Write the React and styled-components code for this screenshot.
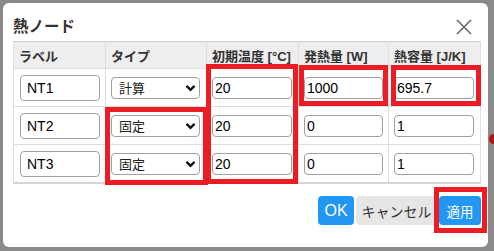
import React from "react";
import styled, { createGlobalStyle } from "styled-components";

const Global = createGlobalStyle`
  html, body { margin: 0; padding: 0; }
  body {
    background: #8a8a8a;
    width: 494px;
    height: 251px;
    overflow: hidden;
    font-family: "Liberation Sans", "Noto Sans CJK JP", sans-serif;
  }
`;

const Backdrop = styled.div`
  padding: 3px 6px 4px 3px;
  position: relative;
  height: 251px;
  box-sizing: border-box;
`;

const Dialog = styled.div`
  position: relative;
  box-sizing: border-box;
  width: 485px;
  height: 244px;
  background: #fff;
  border-radius: 6px;
  padding: 10px 7px 0 10px;
  display: flex;
  flex-direction: column;
`;

const Header = styled.div`
  display: flex;
  align-items: center;
  justify-content: space-between;
  height: 28px;
`;

const Title = styled.h2`
  margin: 0;
  font-size: 15.5px;
  font-weight: bold;
  color: #333;
  line-height: 20px;
`;

const Close = styled.button`
  border: none;
  background: none;
  padding: 0;
  margin-right: 9px;
  width: 16px;
  height: 16px;
  display: flex;
  cursor: pointer;
`;

const Table = styled.table`
  border-collapse: collapse;
  width: 467px;
  border: 1px solid #ccc;
  border-bottom: 2px solid #d6d6d6;
  table-layout: fixed;
`;

const Th = styled.th`
  background: #eee;
  height: 26px;
  padding: 0 5px;
  text-align: left;
  font-size: 13px;
  font-weight: bold;
  color: #333;
  border: 1px solid #ddd;
  border-top: none;
  white-space: nowrap;
`;

const Td = styled.td`
  height: 37px;
  padding: 0 5px 0 ${(p) => p.$pl || 5}px;
  border: 1px solid #ddd;
  vertical-align: middle;
`;

const TextInput = styled.input`
  box-sizing: border-box;
  width: ${(p) => p.$w || 80}px;
  height: ${(p) => (p.$tall ? 26 : 22)}px;
  padding: 0 ${(p) => (p.$tall ? 6 : 2)}px;
  border: 1px solid #a0a0a0;
  border-radius: 4px;
  font-family: "Liberation Sans", "Noto Sans CJK JP", sans-serif;
  font-size: 14px;
  color: #000;
  display: block;
  outline: none;
`;

const SelectBox = styled.div`
  box-sizing: border-box;
  width: 89px;
  height: 22px;
  border: 1px solid #a0a0a0;
  border-radius: 4px;
  display: flex;
  align-items: center;
  justify-content: space-between;
  padding: 0 3px 0 7px;
  font-family: "Noto Sans CJK JP", sans-serif;
  font-size: 13px;
  color: #222;
`;

const Footer = styled.div`
  display: flex;
  justify-content: flex-end;
  gap: 2px;
  margin-top: 12px;
`;

const Button = styled.button`
  height: 29px;
  width: ${(p) => p.$w}px;
  border: none;
  border-radius: 4px;
  padding: 0;
  font-family: "Liberation Sans", "Noto Sans CJK JP", sans-serif;
  font-size: ${(p) => p.$fs || 14}px;
  background: ${(p) => (p.$primary ? "#2196f3" : "#e6e6e6")};
  color: ${(p) => (p.$primary ? "#fff" : "#333")};
  cursor: pointer;
`;

const Mark = styled.div`
  position: absolute;
  box-sizing: border-box;
  border: 5px solid #ec1c24;
  pointer-events: none;
`;

const BehindDot = styled.div`
  position: absolute;
  left: 489px;
  top: 134px;
  width: 8px;
  height: 10px;
  border-radius: 50%;
  background: #b01818;
`;

const Chevron = () => (
  <svg width="11" height="8" viewBox="0 0 11 8">
    <path d="M1.5 1.8 L5.5 5.8 L9.5 1.8" fill="none" stroke="#111" strokeWidth="2.4" />
  </svg>
);

const rows = [
  { label: "NT1", type: "計算", t: "20", q: "1000", c: "695.7" },
  { label: "NT2", type: "固定", t: "20", q: "0", c: "1" },
  { label: "NT3", type: "固定", t: "20", q: "0", c: "1" },
];

export default function App() {
  return (
    <>
      <Global />
      <Backdrop>
        <BehindDot />
        <Dialog>
          <Header>
            <Title>熱ノード</Title>
            <Close aria-label="close">
              <svg width="16" height="16" viewBox="0 0 16 16">
                <path d="M1 1 L15 15 M15 1 L1 15" stroke="#6a6a6a" strokeWidth="1.6" />
              </svg>
            </Close>
          </Header>
          <Table>
            <colgroup>
              <col style={{ width: 92 }} />
              <col style={{ width: 101 }} />
              <col style={{ width: 92 }} />
              <col style={{ width: 90 }} />
              <col style={{ width: 92 }} />
            </colgroup>
            <thead>
              <tr>
                <Th>ラベル</Th>
                <Th>タイプ</Th>
                <Th>初期温度 [°C]</Th>
                <Th>発熱量 [W]</Th>
                <Th>熱容量 [J/K]</Th>
              </tr>
            </thead>
            <tbody>
              {rows.map((r) => (
                <tr key={r.label}>
                  <Td $pl={6}>
                    <TextInput $tall defaultValue={r.label} />
                  </Td>
                  <Td>
                    <SelectBox>
                      <span>{r.type}</span>
                      <Chevron />
                    </SelectBox>
                  </Td>
                  <Td>
                    <TextInput defaultValue={r.t} />
                  </Td>
                  <Td>
                    <TextInput $w={79} defaultValue={r.q} />
                  </Td>
                  <Td>
                    <TextInput defaultValue={r.c} />
                  </Td>
                </tr>
              ))}
            </tbody>
          </Table>
          <Footer>
            <Button $primary $w={36} $fs={16}>OK</Button>
            <Button $w={81}>キャンセル</Button>
            <Button $primary $w={42} $fs={13.5}>適用</Button>
          </Footer>
          <Mark style={{ left: 102, top: 104, width: 103, height: 78 }} />
          <Mark style={{ left: 203, top: 61, width: 92, height: 120 }} />
          <Mark style={{ left: 296, top: 62, width: 89, height: 41 }} />
          <Mark style={{ left: 388, top: 62, width: 90, height: 41 }} />
          <Mark style={{ left: 431, top: 184, width: 53, height: 46 }} />
        </Dialog>
      </Backdrop>
    </>
  );
}
